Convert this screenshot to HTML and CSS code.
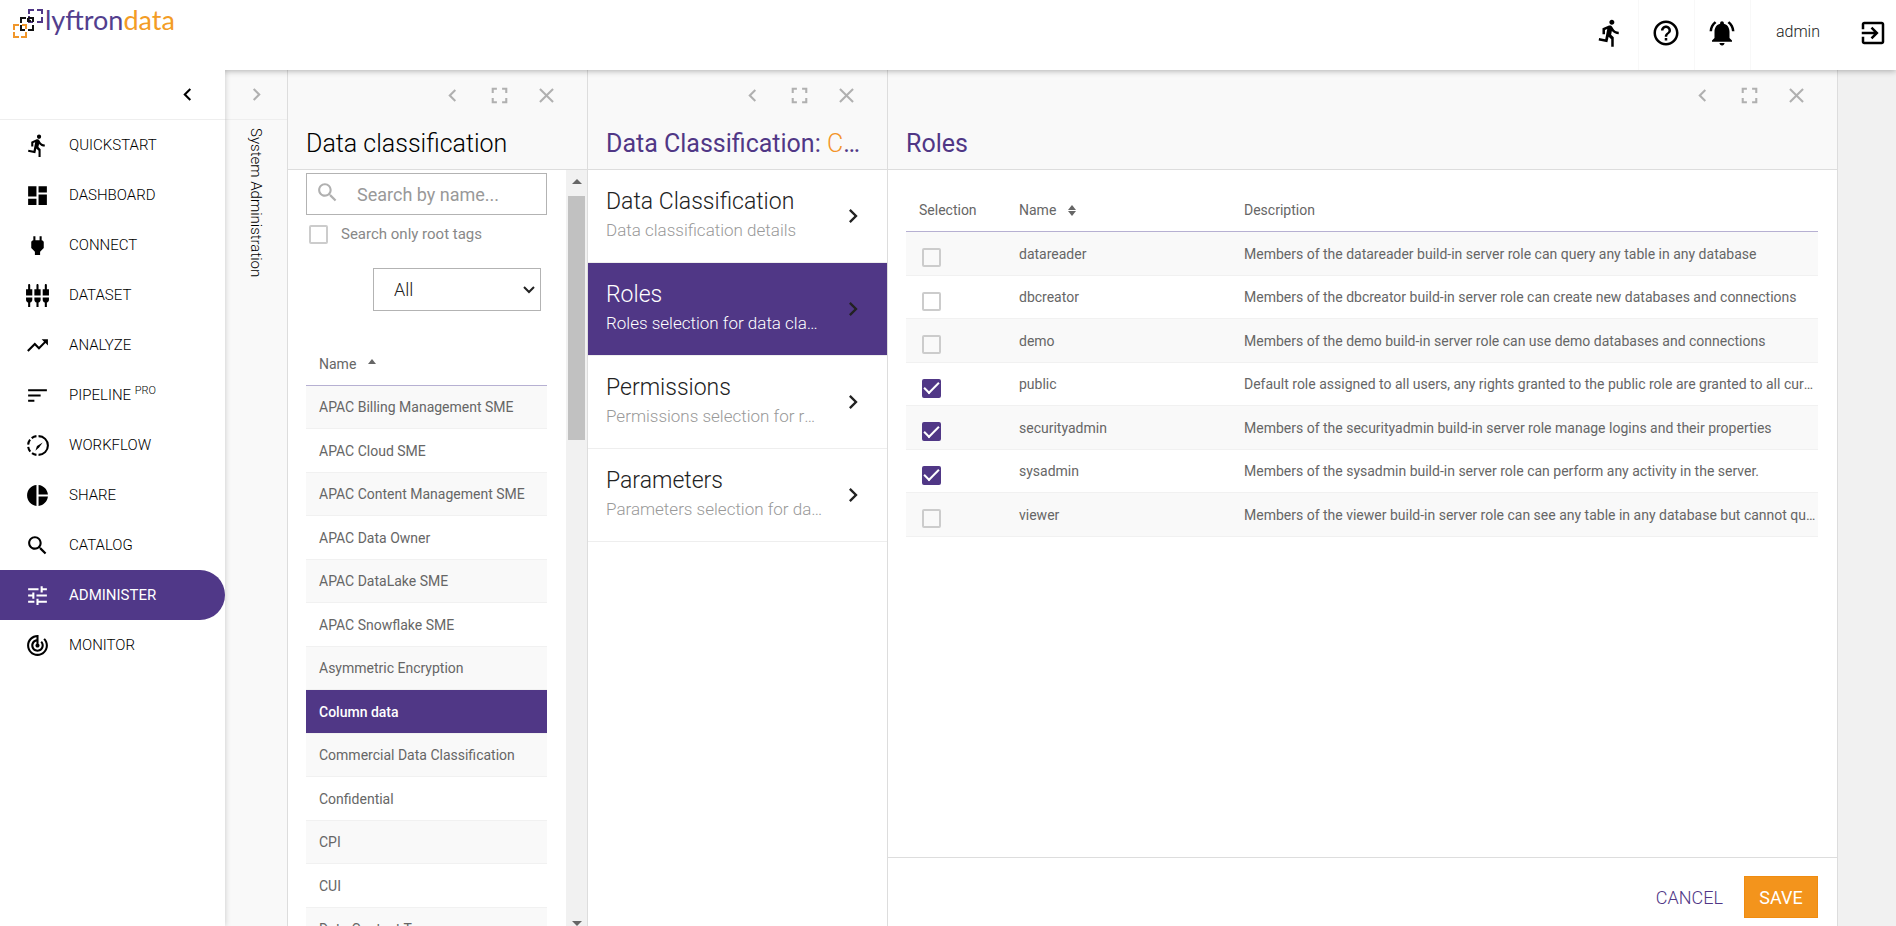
FILE: index.html
```html
<!DOCTYPE html>
<html lang="en">
  <head>
    <meta charset="UTF-8" />
    <meta name="viewport" content="width=device-width, initial-scale=1.0" />
    <title>Lyftrondata</title>
    <link rel="stylesheet" href="styles.css">
  </head>
  <body>
    <!-- icon sprite -->
    <svg class="sprite" aria-hidden="true">
      <symbol id="run" viewBox="0 0 24 24"><path d="M13.49 5.48c1.1 0 2-.9 2-2s-.9-2-2-2-2 .9-2 2 .9 2 2 2zm-3.6 13.9l1-4.4 2.1 2v6h2v-7.5l-2.1-2 .6-3c1.3 1.5 3.3 2.5 5.5 2.5v-2c-1.9 0-3.5-1-4.3-2.4l-1-1.6c-.4-.6-1-1-1.7-1-.3 0-.5.1-.8.1l-5.2 2.2v4.7h2v-3.4l1.8-.7-1.6 8.1-4.9-1-.4 2 7 1.4z"/></symbol>
      <symbol id="help" viewBox="0 0 24 24"><path d="M11 18h2v-2h-2v2zm1-16C6.48 2 2 6.48 2 12s4.48 10 10 10 10-4.48 10-10S17.52 2 12 2zm0 18c-4.41 0-8-3.59-8-8s3.59-8 8-8 8 3.59 8 8-3.59 8-8 8zm0-14c-2.21 0-4 1.79-4 4h2c0-1.1.9-2 2-2s2 .9 2 2c0 2-3 1.75-3 5h2c0-2.25 3-2.5 3-5 0-2.21-1.79-4-4-4z"/></symbol>
      <symbol id="bell" viewBox="0 0 24 24"><path d="M7.58 4.08L6.15 2.65C3.75 4.48 2.17 7.3 2.03 10.5h2c.15-2.65 1.51-4.97 3.55-6.42zm12.39 6.42h2c-.15-3.2-1.73-6.02-4.12-7.85l-1.42 1.43c2.02 1.45 3.39 3.77 3.54 6.42zM18 11c0-3.07-1.64-5.64-4.5-6.32V4c0-.83-.67-1.5-1.5-1.5s-1.5.67-1.5 1.5v.68C7.63 5.36 6 7.92 6 11v5l-2 2v1h16v-1l-2-2v-5zm-6 11c.14 0 .27-.01.4-.04.65-.14 1.18-.58 1.44-1.18.1-.24.15-.5.15-.78h-4c.01 1.1.9 2 2.01 2z"/></symbol>
      <symbol id="exit" viewBox="0 0 24 24"><path d="M10.09 15.59L11.5 17l5-5-5-5-1.41 1.41L12.67 11H3v2h9.67l-2.58 2.59zM19 3H5c-1.11 0-2 .9-2 2v4h2V5h14v14H5v-4H3v4c0 1.1.89 2 2 2h14c1.1 0 2-.9 2-2V5c0-1.1-.9-2-2-2z"/></symbol>
      <symbol id="left" viewBox="0 0 24 24"><path d="M15.41 7.41L14 6l-6 6 6 6 1.41-1.41L10.83 12z"/></symbol>
      <symbol id="right" viewBox="0 0 24 24"><path d="M10 6L8.59 7.41 13.17 12l-4.58 4.59L10 18l6-6z"/></symbol>
      <symbol id="down" viewBox="0 0 12 8"><path d="M1 1l5 5 5-5" fill="none" stroke="currentColor" stroke-width="2"/></symbol>
      <symbol id="full" viewBox="0 0 24 24"><path d="M6.5 14.5h-2v5h5v-2h-3v-3zm-2-5h2v-3h3v-2h-5v5zm13 8h-3v2h5v-5h-2v3zm-3-13v2h3v3h2v-5h-5z"/></symbol>
      <symbol id="close" viewBox="0 0 24 24"><path d="M19 6.4L17.6 5 12 10.6 6.4 5 5 6.4l5.6 5.6L5 17.6 6.4 19l5.6-5.6 5.6 5.6 1.4-1.4-5.6-5.6z"/></symbol>
      <symbol id="dashboard" viewBox="0 0 24 24"><path d="M3 13h8V3H3v10zm0 8h8v-6H3v6zm10 0h8V11h-8v10zm0-18v6h8V3h-8z"/></symbol>
      <symbol id="power" viewBox="0 0 24 24"><path d="M16.01 7L16 3h-2v4h-4V3H8v4h-.01C7 6.99 6 7.99 6 8.99v5.49L9.5 18v3h5v-3l3.5-3.51v-5.5c0-1-1-2-1.99-1.99z"/></symbol>
      <symbol id="dataset" viewBox="0 0 24 24"><path d="M5 2c0-.55-.45-1-1-1s-1 .45-1 1v4H1v6h6V6H5V2zm4 14c0 1.3.84 2.4 2 2.82V23h2v-4.18c1.16-.41 2-1.51 2-2.82v-2H9v2zm-8 0c0 1.3.84 2.4 2 2.82V23h2v-4.18C6.16 18.4 7 17.3 7 16v-2H1v2zM21 6V2c0-.55-.45-1-1-1s-1 .45-1 1v4h-2v6h6V6h-2zm-8-4c0-.55-.45-1-1-1s-1 .45-1 1v4H9v6h6V6h-2V2zm4 14c0 1.3.84 2.4 2 2.82V23h2v-4.18c1.16-.41 2-1.51 2-2.82v-2h-6v2z"/></symbol>
      <symbol id="analyze" viewBox="0 0 24 24"><path d="M16 6l2.29 2.29-4.88 4.88-4-4L2 16.59 3.41 18l6-6 4 4 6.3-6.29L22 12V6z"/></symbol>
      <symbol id="sort" viewBox="0 0 24 24"><path d="M3 18h6v-2H3v2zM3 6v2h18V6H3zm0 7h12v-2H3v2z"/></symbol>
      <symbol id="workflow" viewBox="0 0 24 24">
        <path d="M13 3a9 9 0 0 1 0 18" fill="none" stroke="currentColor" stroke-width="2"/>
        <path d="M11 3a9 9 0 0 0-8 9a9 9 0 0 0 8 9" fill="none" stroke="currentColor" stroke-width="2" stroke-dasharray="5 2.2"/>
        <path d="M17 9l-3.5 5-3.5 3 1.500-4.500z"/>
      </symbol>
      <symbol id="pie" viewBox="0 0 24 24"><path d="M11 2v20c-5.07-.5-9-4.79-9-10s3.93-9.5 9-10zm2.03 0v8.99H22c-.47-4.74-4.24-8.52-8.97-8.99zm0 11.01V22c4.74-.47 8.5-4.25 8.97-8.99h-8.97z"/></symbol>
      <symbol id="search" viewBox="0 0 24 24"><path d="M15.5 14h-.79l-.28-.27C15.41 12.59 16 11.11 16 9.5 16 5.91 13.09 3 9.5 3S3 5.91 3 9.5 5.91 16 9.5 16c1.61 0 3.09-.59 4.23-1.57l.27.28v.79l5 4.99L20.49 19l-4.99-5zm-6 0C7.01 14 5 11.99 5 9.5S7.01 5 9.5 5 14 7.01 14 9.5 11.99 14 9.5 14z"/></symbol>
      <symbol id="tune" viewBox="0 0 24 24"><path d="M3 17v2h6v-2H3zM3 5v2h10V5H3zm10 16v-2h8v-2h-8v-2h-2v6h2zM7 9v2H3v2h4v2h2V9H7zm14 4v-2H11v2h10zm-6-4h2V7h4V5h-4V3h-2v6z"/></symbol>
      <symbol id="monitor" viewBox="0 0 24 24"><path d="M19.07 4.93l-1.41 1.41C19.1 7.79 20 9.79 20 12c0 4.42-3.58 8-8 8s-8-3.58-8-8c0-4.08 3.05-7.44 7-7.93v2.02C8.16 6.57 6 9.03 6 12c0 3.31 2.69 6 6 6s6-2.69 6-6c0-1.66-.67-3.16-1.76-4.24l-1.41 1.41C15.55 9.9 16 10.9 16 12c0 2.21-1.79 4-4 4s-4-1.79-4-4c0-1.86 1.28-3.41 3-3.86v2.14c-.6.35-1 .98-1 1.72 0 1.1.9 2 2 2s2-.9 2-2c0-.74-.4-1.38-1-1.72V2h-1C6.48 2 2 6.48 2 12s4.48 10 10 10 10-4.48 10-10c0-2.76-1.12-5.26-2.93-7.07z"/></symbol>
    </svg>

    <header class="header">
      <a class="logo" href="#">
        <svg class="logo-mark" viewBox="0 0 32 32" stroke-width="2">
          <path stroke="#f0962a" d="M1 23v-5h5M9 18h4v4M1 25v5h5M8 30h5v-5"/>
          <path stroke="#503786" d="M16 7V3h5M24 3h5v4M16 9v6h4M24 15h5v-5"/>
          <path stroke="#111" d="M8 16v-5h5M15 11h5v4M8 18v5h4M15 23h5v-5M15 11v3h3"/>
        </svg>
        <span class="logo-text">lyftron<span>data</span></span>
      </a>
      <nav class="tools">
        <button class="tool" aria-label="Quickstart"><svg><use href="#run"/></svg></button>
        <button class="tool" aria-label="Help"><svg><use href="#help"/></svg></button>
        <button class="tool" aria-label="Notifications"><svg><use href="#bell"/></svg></button>
        <a class="user" href="#">admin</a>
        <button class="tool logout" aria-label="Log out"><svg><use href="#exit"/></svg></button>
      </nav>
    </header>

    <div class="page">
      <aside class="sidebar">
        <div class="collapse"><button aria-label="Collapse menu"><svg><use href="#left"/></svg></button></div>
        <nav>
          <a class="nav-item" href="#"><svg><use href="#run"/></svg>QUICKSTART</a>
          <a class="nav-item" href="#"><svg><use href="#dashboard"/></svg>DASHBOARD</a>
          <a class="nav-item" href="#"><svg><use href="#power"/></svg>CONNECT</a>
          <a class="nav-item" href="#"><svg><use href="#dataset"/></svg>DATASET</a>
          <a class="nav-item" href="#"><svg><use href="#analyze"/></svg>ANALYZE</a>
          <a class="nav-item" href="#"><svg><use href="#sort"/></svg><span>PIPELINE <sup>PRO</sup></span></a>
          <a class="nav-item" href="#"><svg><use href="#workflow"/></svg>WORKFLOW</a>
          <a class="nav-item" href="#"><svg><use href="#pie"/></svg>SHARE</a>
          <a class="nav-item" href="#"><svg><use href="#search"/></svg>CATALOG</a>
          <a class="nav-item active" href="#"><svg><use href="#tune"/></svg>ADMINISTER</a>
          <a class="nav-item" href="#"><svg><use href="#monitor"/></svg>MONITOR</a>
        </nav>
      </aside>

      <main class="panels">
        <section class="panel folded">
          <div class="expand"><button aria-label="Expand"><svg><use href="#right"/></svg></button></div>
          <h2>System Administration</h2>
        </section>

        <section class="panel narrow">
          <div class="panel-head">
            <div class="panel-tools">
              <button aria-label="Fold"><svg><use href="#left"/></svg></button>
              <button aria-label="Full screen"><svg><use href="#full"/></svg></button>
              <button aria-label="Close"><svg><use href="#close"/></svg></button>
            </div>
            <h2>Data classification</h2>
          </div>
          <div class="scroll-area">
            <div class="scroll-content">
              <div class="search-box">
                <svg><use href="#search"/></svg>
                <input type="text" aria-label="Search by name" placeholder="Search by name..." />
              </div>
              <label class="root-only"><input type="checkbox" class="check" />Search only root tags</label>
              <div class="filter">
                <select aria-label="Filter">
                  <option>All</option>
                </select>
                <svg><use href="#down"/></svg>
              </div>
              <table class="grid tags">
                <thead>
                  <tr><th>Name <span class="arrows"><i class="up"></i></span></th></tr>
                </thead>
                <tbody>
                  <tr><td>APAC Billing Management SME</td></tr>
                  <tr><td>APAC Cloud SME</td></tr>
                  <tr><td>APAC Content Management SME</td></tr>
                  <tr><td>APAC Data Owner</td></tr>
                  <tr><td>APAC DataLake SME</td></tr>
                  <tr><td>APAC Snowflake SME</td></tr>
                  <tr><td>Asymmetric Encryption</td></tr>
                  <tr class="selected"><td>Column data</td></tr>
                  <tr><td>Commercial Data Classification</td></tr>
                  <tr><td>Confidential</td></tr>
                  <tr><td>CPI</td></tr>
                  <tr><td>CUI</td></tr>
                  <tr><td>Data Contact Type</td></tr>
                </tbody>
              </table>
            </div>
            <div class="scrollbar">
              <i class="up"></i>
              <div class="thumb"></div>
              <i class="down"></i>
            </div>
          </div>
        </section>

        <section class="panel narrow">
          <div class="panel-head">
            <div class="panel-tools">
              <button aria-label="Fold"><svg><use href="#left"/></svg></button>
              <button aria-label="Full screen"><svg><use href="#full"/></svg></button>
              <button aria-label="Close"><svg><use href="#close"/></svg></button>
            </div>
            <h2 class="accent">Data Classification: <span>Column data</span></h2>
          </div>
          <a class="entry" href="#">
            <div class="entry-text"><h3>Data Classification</h3><p>Data classification details</p></div>
            <svg><use href="#right"/></svg>
          </a>
          <a class="entry active" href="#">
            <div class="entry-text"><h3>Roles</h3><p>Roles selection for data classification</p></div>
            <svg><use href="#right"/></svg>
          </a>
          <a class="entry" href="#">
            <div class="entry-text"><h3>Permissions</h3><p>Permissions selection for roles</p></div>
            <svg><use href="#right"/></svg>
          </a>
          <a class="entry" href="#">
            <div class="entry-text"><h3>Parameters</h3><p>Parameters selection for data classification</p></div>
            <svg><use href="#right"/></svg>
          </a>
        </section>

        <section class="panel wide">
          <div class="panel-head">
            <div class="panel-tools">
              <button aria-label="Fold"><svg><use href="#left"/></svg></button>
              <button aria-label="Full screen"><svg><use href="#full"/></svg></button>
              <button aria-label="Close"><svg><use href="#close"/></svg></button>
            </div>
            <h2 class="accent">Roles</h2>
          </div>
          <div class="panel-body">
            <table class="grid roles">
              <thead>
                <tr>
                  <th class="col-select">Selection</th>
                  <th class="col-name">Name <span class="arrows"><i class="up"></i><i class="down"></i></span></th>
                  <th>Description</th>
                </tr>
              </thead>
              <tbody>
                <tr>
                  <td><input type="checkbox" class="check" aria-label="datareader" /></td>
                  <td>datareader</td>
                  <td>Members of the datareader build-in server role can query any table in any database</td>
                </tr>
                <tr>
                  <td><input type="checkbox" class="check" aria-label="dbcreator" /></td>
                  <td>dbcreator</td>
                  <td>Members of the dbcreator build-in server role can create new databases and connections</td>
                </tr>
                <tr>
                  <td><input type="checkbox" class="check" aria-label="demo" /></td>
                  <td>demo</td>
                  <td>Members of the demo build-in server role can use demo databases and connections</td>
                </tr>
                <tr>
                  <td><input type="checkbox" class="check" aria-label="public" checked /></td>
                  <td>public</td>
                  <td>Default role assigned to all users, any rights granted to the public role are granted to all current users</td>
                </tr>
                <tr>
                  <td><input type="checkbox" class="check" aria-label="securityadmin" checked /></td>
                  <td>securityadmin</td>
                  <td>Members of the securityadmin build-in server role manage logins and their properties</td>
                </tr>
                <tr>
                  <td><input type="checkbox" class="check" aria-label="sysadmin" checked /></td>
                  <td>sysadmin</td>
                  <td>Members of the sysadmin build-in server role can perform any activity in the server.</td>
                </tr>
                <tr>
                  <td><input type="checkbox" class="check" aria-label="viewer" /></td>
                  <td>viewer</td>
                  <td>Members of the viewer build-in server role can see any table in any database but cannot query them</td>
                </tr>
              </tbody>
            </table>
          </div>
          <div class="panel-foot">
            <button class="cancel">CANCEL</button>
            <button class="save">SAVE</button>
          </div>
        </section>
      </main>
    </div>
  </body>
</html>
```
FILE: styles.css
```css
* {
  box-sizing: border-box;
}
body {
  display: flex;
  flex-direction: column;
  height: 100vh;
  margin: 0;
  overflow: hidden;
  background: #f1f1f1;
  color: #222;
  font-family: Roboto, "Liberation Sans", sans-serif;
  font-size: 15px;
}
a {
  color: inherit;
  text-decoration: none;
}
button {
  padding: 0;
  border: none;
  background: none;
  color: inherit;
  font: inherit;
  cursor: pointer;
}
h2,
h3,
p {
  margin: 0;
  font-weight: 300;
}
svg {
  flex: none;
  width: 25px;
  height: 25px;
  fill: currentColor;
}
button svg {
  display: block;
  margin: auto;
}
.sprite {
  position: absolute;
  width: 0;
  height: 0;
}

/* header */
.header {
  position: relative;
  z-index: 1;
  display: flex;
  flex: none;
  justify-content: space-between;
  height: 70px;
  background: #fff;
  box-shadow: 0 1px 6px rgba(0, 0, 0, 0.3);
}
.logo {
  display: flex;
  padding: 7px 0 0 13px;
}
.logo-mark {
  width: 32px;
  height: 32px;
  fill: none;
}
.logo-text {
  color: #533f8e;
  font-family: Lato, sans-serif;
  font-size: 27px;
  line-height: 25px;
}
.logo-text span {
  color: #f39c25;
}
.tools {
  display: flex;
}
.tool {
  width: 56px;
  padding-top: 18px;
  border-right: 1px solid #f8f8f8;
  color: #000;
}
.tool svg {
  width: 30px;
  height: 30px;
  margin: 0 auto 22px;
}
.logout {
  width: 46px;
  border: none;
}
.user {
  padding: 21px 30px 0 25px;
  font-size: 16px;
  font-weight: 300;
  line-height: 22px;
}

/* side menu */
.page {
  display: flex;
  flex: 1;
  min-height: 0;
}
.sidebar {
  position: relative;
  z-index: 2;
  flex: none;
  width: 225px;
  background: #fff;
  box-shadow: 0 0 6px rgba(0, 0, 0, 0.2);
  clip-path: inset(0 -10px 0 0);
}
.collapse,
.expand {
  display: flex;
  align-items: center;
  height: 50px;
  border-bottom: 1px solid #eee;
}
.collapse {
  justify-content: flex-end;
  padding-right: 25px;
  color: #000;
}
.nav-item {
  display: flex;
  align-items: center;
  gap: 19px;
  height: 50px;
  padding-left: 25px;
  color: #000;
  font-size: 15px;
  font-weight: 300;
  line-height: 20px;
}
.nav-item sup {
  font-size: 11px;
  line-height: 11px;
}
.nav-item.active {
  border-radius: 0 25px 25px 0;
  background: #503888;
  color: #fff;
  font-weight: 400;
}

/* panels */
.panels {
  display: flex;
  flex: 1;
  min-width: 0;
  padding-right: 58px;
}
.panel {
  display: flex;
  flex: none;
  flex-direction: column;
  border-right: 1px solid #ddd;
  background: #fff;
}
.folded {
  width: 63px;
  background: #f9f9f9;
}
.expand {
  justify-content: center;
  color: #b0b0b0;
}
.folded h2 {
  align-self: center;
  padding-top: 8px;
  color: #000;
  font-size: 15px;
  line-height: 20px;
  writing-mode: vertical-rl;
}
.narrow {
  width: 300px;
}
.wide {
  flex: 1;
  min-width: 0;
}
.panel-head {
  flex: none;
  height: 100px;
  border-bottom: 1px solid #ddd;
  background: #f9f9f9;
}
.panel-tools {
  display: flex;
  justify-content: flex-end;
  height: 50px;
  padding-right: 17px;
  color: #b0b0b0;
}
.panel-tools button {
  width: 47px;
}
.panel-head h2 {
  overflow: hidden;
  padding: 8px 22px 0 18px;
  color: #000;
  font-size: 25px;
  line-height: 32px;
  text-overflow: ellipsis;
  white-space: nowrap;
}
.panel-head .accent {
  color: #503786;
  font-weight: 400;
}
.accent span {
  color: #f3942a;
  font-weight: 300;
}

/* list with its scrollbar */
.scroll-area {
  display: flex;
  flex: 1;
  min-height: 0;
}
.scroll-content {
  flex: 1;
  overflow: hidden;
  padding: 3px 19px 0 18px;
}
.scrollbar {
  display: flex;
  flex-direction: column;
  align-items: center;
  width: 21px;
  padding-top: 9px;
  background: #f1f1f1;
}
.thumb {
  flex: none;
  width: 17px;
  height: 244px;
  margin-top: 12px;
  background: #c1c1c1;
}
.up,
.down {
  border: 4px solid transparent;
}
.up {
  border-top: none;
  border-bottom: 5px solid #666;
}
.down {
  border-top: 5px solid #666;
  border-bottom: none;
}
.scrollbar .up,
.scrollbar .down {
  border-right-width: 5px;
  border-left-width: 5px;
}
.scrollbar .down {
  margin-top: auto;
}
.search-box {
  display: flex;
  height: 42px;
  padding: 6px 8px;
  border: 1px solid #b3b3b3;
  color: #b0b0b0;
}
.search-box input {
  width: 100%;
  min-width: 0;
  padding: 2px 0 0 17px;
  border: none;
  outline: none;
  font: 18px/28px Roboto, sans-serif;
}
.search-box input::placeholder {
  color: #999;
}
.root-only {
  display: flex;
  align-items: center;
  gap: 13px;
  height: 38px;
  padding-left: 3px;
  color: #888;
  font-size: 15px;
}
.check {
  display: grid;
  flex: none;
  place-content: center;
  width: 19px;
  height: 19px;
  margin: 0;
  border: 2px solid #ccc;
  border-radius: 2px;
  appearance: none;
}
.check:checked {
  border-color: #503786;
  background: #503786;
}
.check:checked::after {
  content: "";
  width: 13px;
  height: 6px;
  margin-bottom: 4px;
  border: solid #fff;
  border-width: 0 0 2px 2px;
  transform: rotate(-45deg);
}
.filter {
  display: flex;
  align-items: center;
  width: 168px;
  height: 43px;
  margin: 15px 6px 31px auto;
  padding-right: 5px;
  border: 1px solid #b3b3b3;
  color: #222;
}
.filter select {
  flex: 1;
  height: 41px;
  padding: 0 0 0 20px;
  border: none;
  background: none;
  color: inherit;
  font: 300 18px Roboto, sans-serif;
  appearance: none;
}
.filter svg {
  width: 12px;
  height: 8px;
}

/* tables */
.grid {
  width: 100%;
  border-spacing: 0;
  table-layout: fixed;
  color: #666;
  font-size: 14px;
}
.grid th,
.grid td {
  overflow: hidden;
  height: 43px;
  padding: 0 2px 0 13px;
  border-bottom: 1px solid #f1f1f1;
  text-align: left;
  text-overflow: ellipsis;
  white-space: nowrap;
}
.grid th {
  height: 44px;
  border-color: #b6b0d2;
  font-weight: 400;
}
.tags tr:nth-child(even) td,
.roles tr:nth-child(odd) td {
  height: 44px;
}
.grid tbody tr:nth-child(odd) {
  background: #f9f9f9;
}
.grid tbody .selected {
  background: #503786;
  color: #fff;
  font-weight: 500;
}
.grid .check {
  margin: 8px 0 0 3px;
}
.arrows {
  display: inline-flex;
  flex-direction: column;
  gap: 1px;
  margin-left: 8px;
  vertical-align: middle;
}
.tags .arrows {
  padding-bottom: 6px;
}
.col-select {
  width: 100px;
}
.col-name {
  width: 225px;
}

/* sections of a tag */
.entry {
  display: flex;
  align-items: center;
  justify-content: space-between;
  height: 93px;
  padding: 0 20px 0 18px;
  border-bottom: 1px solid #eee;
}
.entry svg {
  width: 28px;
  height: 28px;
}
.entry-text {
  width: 217px;
  padding-bottom: 2px;
}
.entry h3 {
  font-size: 23px;
  line-height: 30px;
}
.entry p {
  overflow: hidden;
  color: #999;
  font-size: 17px;
  line-height: 26px;
  text-overflow: ellipsis;
  white-space: nowrap;
}
.entry.active {
  background: #503786;
}
.entry.active h3,
.entry.active p {
  color: #fff;
}

.panel-body {
  flex: 1;
  min-height: 0;
  padding: 18px 19px 0 18px;
}
.panel-foot {
  display: flex;
  flex: none;
  justify-content: flex-end;
  align-items: flex-start;
  gap: 21px;
  height: 69px;
  padding: 18px 19px 0 0;
  border-top: 1px solid #ddd;
  font-size: 18px;
}
.cancel {
  height: 42px;
  color: #503786;
  font-weight: 300;
}
.save {
  width: 74px;
  height: 42px;
  border: 1px solid #f08c10;
  background: #f3941c;
  color: #fff;
}
```
